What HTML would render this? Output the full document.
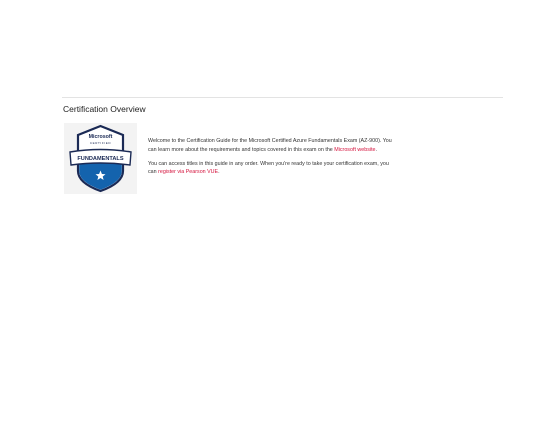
<!DOCTYPE html>
<html><head><style>
body{margin:0;width:552px;height:428px;background:#fff;font-family:"Liberation Sans",sans-serif;position:relative;overflow:hidden}
.hr{position:absolute;left:62px;top:97px;width:441px;height:1px;background:#e3e3e3}
h2{position:absolute;left:63px;top:104px;margin:0;font-size:8.5px;font-weight:normal;color:#222}
.box{position:absolute;left:64px;top:123px;width:73px;height:71px;background:#f3f3f3}
.txt{position:absolute;left:148px;top:137px;width:260px;font-size:5.35px;line-height:8.6px;color:#333}
.txt p{margin:0 0 5.5px}
a{color:#d4113b;text-decoration:none}
</style></head><body>
<div class="hr"></div>
<h2>Certification Overview</h2>
<div class="box">
<svg width="73" height="71" viewBox="0 0 73 71">
<path d="M14 12 L36.5 3 L59 12 L59 48 Q59 60 36.5 68 Q14 60 14 48 Z" fill="#fff" stroke="#1b2a55" stroke-width="2.2"/>
<path d="M15.2 40 L57.8 40 L57.8 48 Q57.8 59 36.5 66.7 Q15.2 59 15.2 48 Z" fill="#1463ad"/>
<text x="36.5" y="15" font-size="5.3" font-weight="bold" text-anchor="middle" fill="#1b2a55" font-family="Liberation Sans">Microsoft</text>
<text x="36.5" y="21" font-size="3" text-anchor="middle" fill="#1b2a55" letter-spacing="0.6" font-family="Liberation Sans">CERTIFIED</text>
<path d="M6 29 Q36.5 24 67 29 L66 42 Q36.5 38 7 42 Z" fill="#fff" stroke="#1b2a55" stroke-width="1.4"/>
<text x="36.5" y="37" font-size="5.6" font-weight="bold" text-anchor="middle" fill="#1b2a55" font-family="Liberation Sans">FUNDAMENTALS</text>
<path d="M36.5 47.5 L37.9 51 L41.5 51.2 L38.7 53.5 L39.6 57 L36.5 55 L33.4 57 L34.3 53.5 L31.5 51.2 L35.1 51 Z" fill="#fff"/>
</svg>
</div>
<div class="txt">
<p>Welcome to the Certification Guide for the Microsoft Certified Azure Fundamentals Exam (AZ-900). You<br>can learn more about the requirements and topics covered in this exam on the <a>Microsoft website</a>.</p>
<p>You can access titles in this guide in any order. When you're ready to take your certification exam, you<br>can <a>register via Pearson VUE</a>.</p>
</div>
</body></html>
